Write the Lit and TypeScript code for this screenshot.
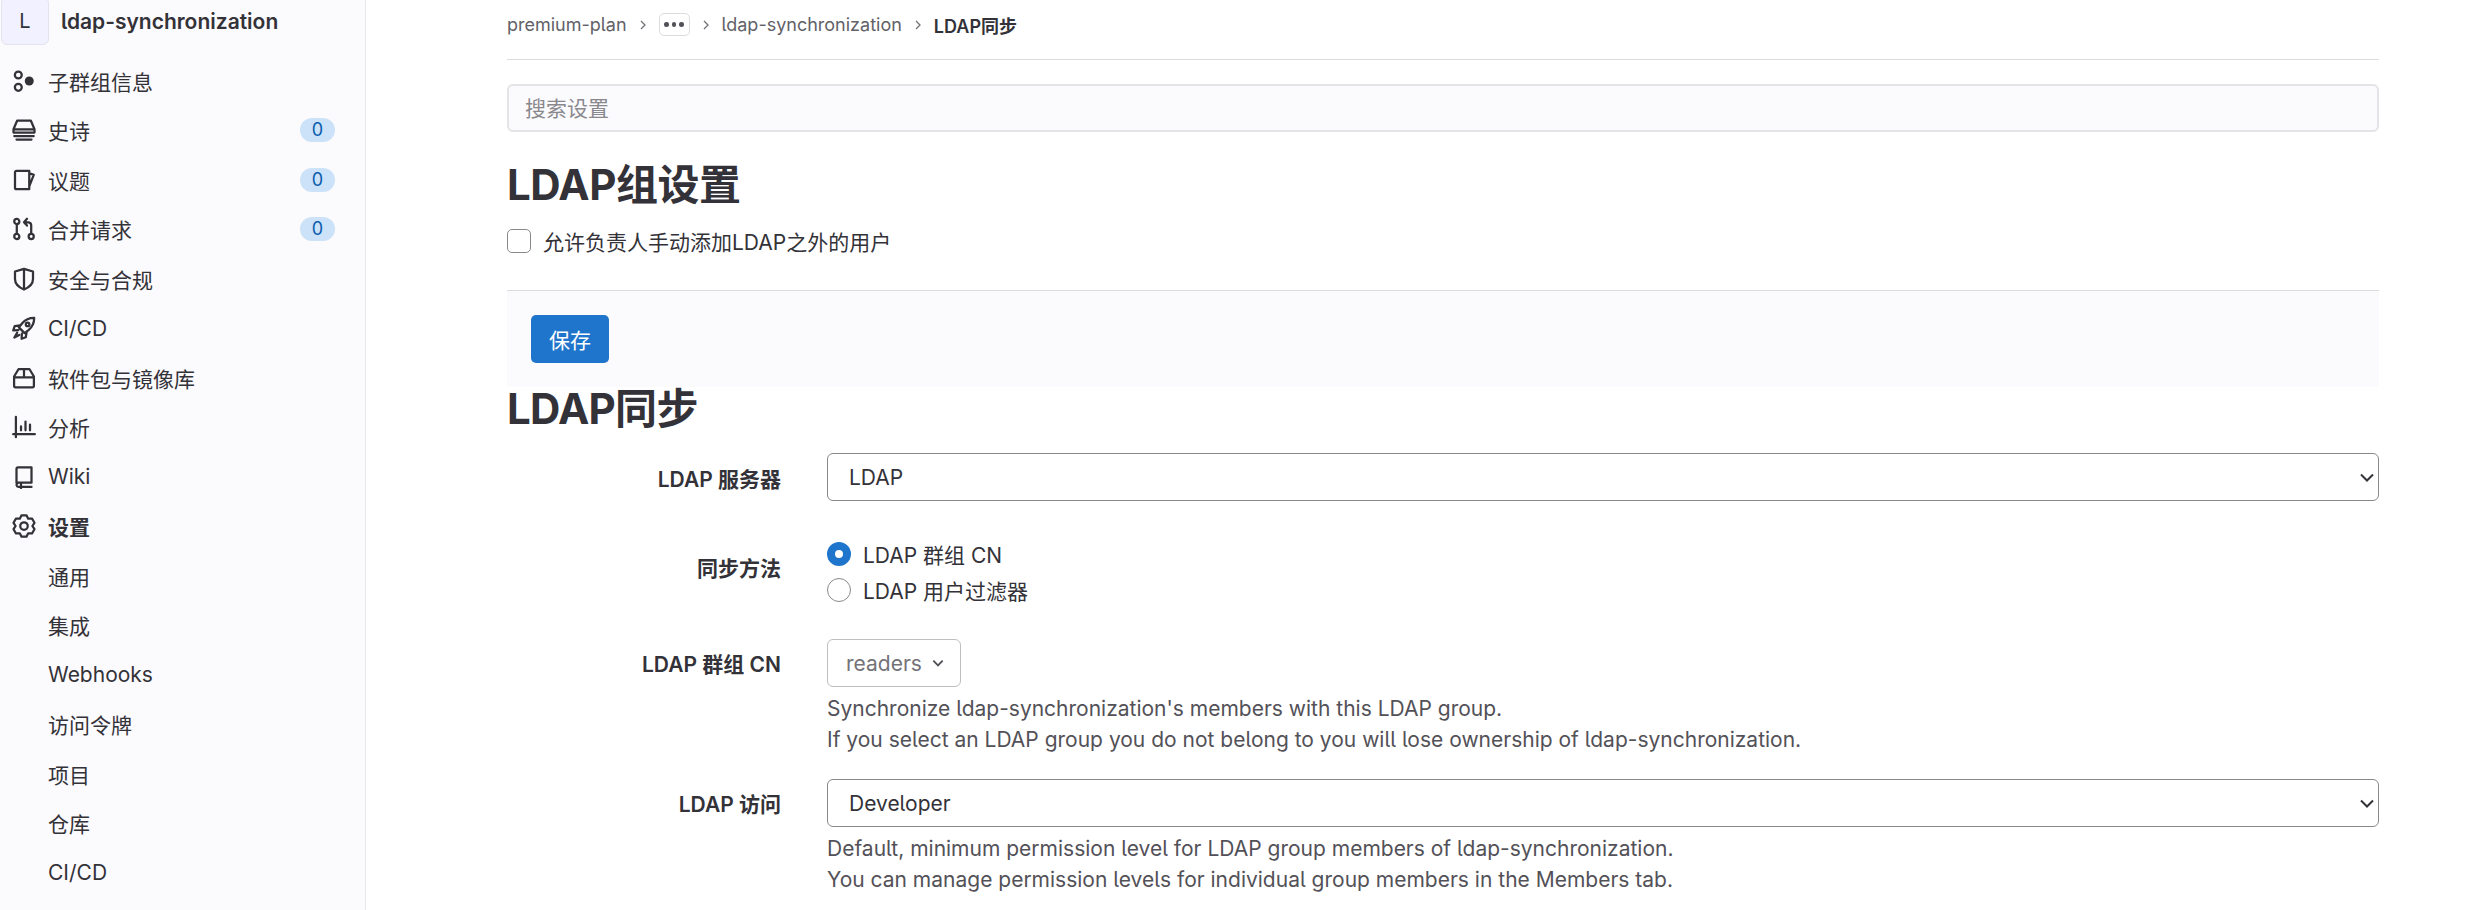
import { LitElement, html, css, svg } from 'lit';
import { customElement, state } from 'lit/decorators.js';

// Gear outline for the settings icon, six teeth round the middle of a 16 box.
const gearPath = (() => {
  const pts: string[] = [];
  for (let i = 0; i < 6; i++) {
    const a = (i * 60 - 90) * (Math.PI / 180);
    for (const [r, d] of [[5.6, -30], [7.3, -13], [7.3, 13], [5.6, 30]]) {
      const t = a + (d * Math.PI) / 180;
      pts.push(`${(8 + r * Math.cos(t)).toFixed(2)} ${(8 + r * Math.sin(t)).toFixed(2)}`);
    }
  }
  return `M${pts.join('L')}Z`;
})();

const icons: Record<string, unknown> = {
  subgroup: svg`<circle cx="4.2" cy="4" r="2.3"/><circle cx="4.2" cy="12.2" r="2.3"/><circle cx="11.5" cy="8" r="3" fill="currentColor" stroke="none"/>`,
  epic: svg`<path d="M1 7.5 3.4 1.8h9.2L15 7.5v2.2H1zM1 7.5h14M1.5 12h13M3 14.4h10"/>`,
  issue: svg`<path d="M3 1.9h8.5v12.2H3a1 1 0 0 1-1-1V2.9a1 1 0 0 1 1-1zM11.5 3.4l3 1.2-3 7.6"/>`,
  merge: svg`<circle cx="3.2" cy="3" r="1.7"/><circle cx="3.2" cy="13" r="1.7"/><circle cx="12.8" cy="13" r="1.7"/><path d="M3.2 4.7v6.6M12.8 11.3V5.5a2 2 0 0 0-2-2H8.5M10 1.2 8 3.5l2 2.2"/>`,
  shield: svg`<path d="M8 1.2 14 3v5c0 3.4-2.6 5.6-6 7-3.4-1.4-6-3.6-6-7V3zM8 1.2V15"/>`,
  rocket: svg`<path d="M14.8 1.2c-3.6 0-6 1.2-8 3.6L4.6 7.6l3.8 3.8 2.8-2.2c2.4-2 3.6-4.4 3.6-8zM5.4 6.2 1.8 6.8.8 9.6l3.4-.2M9.8 10.6l-.6 3.6-2.8 1 .2-3.4M3.4 11.2 1.6 14.4l3.2-1.8"/><circle cx="10.4" cy="5.6" r="1.2"/>`,
  package: svg`<path d="M4.4 2h7.2l3 5v6.2a1 1 0 0 1-1 1H2.4a1 1 0 0 1-1-1V7zM1.4 7.6h13.2M8 2v5.6"/>`,
  chart: svg`<path d="M2.6 1.2v13.6M.8 12.8h14.4M6 10.2V7.6M9 10.2V4.4M12 10.2V6.4"/>`,
  book: svg`<path d="M3 12V2.6a1 1 0 0 1 1-1h9v10.2H4.2A1.7 1.7 0 0 0 3 13.4a1.5 1.5 0 0 0 1.4 1.2H13M6 12v3.4"/>`,
  gear: svg`<path d=${gearPath}/><circle cx="8" cy="8" r="2.5"/>`,
};

const navItems = [
  { icon: 'subgroup', label: '子群组信息' },
  { icon: 'epic', label: '史诗', count: 0 },
  { icon: 'issue', label: '议题', count: 0 },
  { icon: 'merge', label: '合并请求', count: 0 },
  { icon: 'shield', label: '安全与合规' },
  { icon: 'rocket', label: 'CI/CD' },
  { icon: 'package', label: '软件包与镜像库' },
  { icon: 'chart', label: '分析' },
  { icon: 'book', label: 'Wiki' },
  { icon: 'gear', label: '设置', active: true },
];

const subItems = ['通用', '集成', 'Webhooks', '访问令牌', '项目', '仓库', 'CI/CD'];

@customElement('app-root')
class AppRoot extends LitElement {
  static styles = css`
    :host {
      display: flex;
      height: 910px;
      overflow: hidden;
      background: #fff;
      color: #333238;
      font-family: Inter, "Noto Sans CJK SC", sans-serif;
      font-feature-settings: "cv05" 1;
    }
    .sidebar {
      flex: none;
      width: 365px;
      height: 910px;
      background: #fbfafd;
      border-right: 1px solid #e9e9eb;
    }
    .context {
      display: flex;
      align-items: center;
      gap: 12px;
      margin: -3px 0 11px 1px;
    }
    .avatar {
      display: flex;
      align-items: center;
      justify-content: center;
      width: 46px;
      height: 46px;
      border: 1px solid #e4e3ef;
      border-radius: 6px;
      background: #f1f1ff;
      font-size: 20px;
    }
    .context-name {
      font-size: 21px;
      font-weight: 600;
    }
    .nav-row {
      display: flex;
      align-items: center;
      height: 49.5px;
      padding-left: 12px;
      font-size: 21px;
    }
    .nav-row.sub {
      padding-left: 48px;
    }
    .nav-row.active {
      font-weight: 700;
    }
    .nav-icon {
      flex: none;
      width: 24px;
      height: 24px;
      margin-right: 12px;
      fill: none;
      stroke: currentColor;
      stroke-width: 1.5;
      stroke-linejoin: round;
      stroke-linecap: round;
    }
    .badge {
      margin-left: auto;
      margin-right: 30px;
      width: 35px;
      height: 24px;
      line-height: 24px;
      border-radius: 12px;
      background: #cbe2f9;
      color: #0b5cad;
      font-size: 18px;
      text-align: center;
    }
    .main {
      flex: none;
      width: 1872px;
      margin-left: 141px;
      font-size: 21px;
    }
    .crumbs {
      display: flex;
      align-items: center;
      height: 60px;
      padding-bottom: 10px;
      box-sizing: border-box;
      border-bottom: 1px solid #dcdcde;
      color: #626168;
      font-size: 18px;
    }
    .crumbs b {
      color: #333238;
      font-weight: 600;
    }
    .sep {
      width: 32px;
      height: 14px;
      flex: none;
      fill: none;
      stroke: #737278;
      stroke-width: 1.3;
    }
    .more {
      display: flex;
      align-items: center;
      justify-content: center;
      gap: 3px;
      width: 29px;
      height: 21px;
      border: 1px solid #dcdcde;
      border-radius: 5px;
    }
    .more i {
      width: 4.5px;
      height: 4.5px;
      border-radius: 50%;
      background: #535158;
    }
    .search {
      display: block;
      width: 100%;
      height: 48px;
      margin-top: 24px;
      padding: 0 16px;
      box-sizing: border-box;
      border: 2px solid #e4e4e6;
      border-radius: 6px;
      background: #fbfafd;
      font: inherit;
    }
    .search::placeholder {
      color: #89888d;
    }
    h1 {
      margin: 28px 0 0;
      font-size: 42px;
      line-height: 50px;
      font-weight: 700;
      letter-spacing: -0.5px;
    }
    .check-row {
      display: flex;
      align-items: center;
      gap: 12px;
      height: 24px;
      margin-top: 19px;
    }
    .check {
      appearance: none;
      flex: none;
      width: 24px;
      height: 24px;
      margin: 0;
      border: 1px solid #89888d;
      border-radius: 5px;
      background: #fff;
    }
    .footer {
      height: 97px;
      margin-top: 37px;
      padding: 24px;
      box-sizing: border-box;
      border-top: 1px solid #dcdcde;
      background: #fbfafd;
    }
    .save {
      display: block;
      width: 78px;
      height: 48px;
      padding: 0;
      border: 0;
      border-radius: 5px;
      background: #1f75cb;
      color: #fff;
      font: inherit;
    }
    h2 {
      margin: 0;
      font-size: 42px;
      line-height: 44px;
      font-weight: 700;
      letter-spacing: -0.7px;
    }
    .field {
      display: grid;
      grid-template-columns: 274px 1fr;
      column-gap: 46px;
    }
    .field > label {
      height: 48px;
      box-sizing: border-box;
      font-weight: 600;
      text-align: right;
      line-height: 48px;
    }
    .f-server {
      margin-top: 22px;
    }
    .f-server > label {
      padding-top: 3px;
    }
    .f-method {
      margin-top: 35px;
    }
    .f-method > label {
      padding-top: 9px;
    }
    .f-group {
      margin-top: 31px;
    }
    .f-group > label {
      padding-top: 2px;
    }
    .f-access {
      margin-top: 24px;
    }
    .f-access > label {
      padding-top: 2px;
    }
    select {
      appearance: none;
      display: block;
      width: 100%;
      height: 48px;
      padding: 0 18px 0 21px;
      border: 1px solid #89888d;
      border-radius: 6px;
      background: #fff url("data:image/svg+xml,%3Csvg xmlns='http://www.w3.org/2000/svg' width='16' height='16' viewBox='0 0 16 16'%3E%3Cpath d='M2 5.5l6 6 6-6' fill='none' stroke='%23333238' stroke-width='2'/%3E%3C/svg%3E") no-repeat right 3px center;
      color: #333238;
      font: inherit;
    }
    .radio-row {
      display: flex;
      align-items: center;
      gap: 12px;
      height: 36px;
    }
    .radio {
      appearance: none;
      flex: none;
      width: 24px;
      height: 24px;
      margin: 0;
      border: 1px solid #89888d;
      border-radius: 50%;
      background: #fff;
    }
    .radio:checked {
      border: 8px solid #1f75cb;
    }
    .dropdown {
      display: flex;
      align-items: center;
      justify-content: space-between;
      width: 134px;
      height: 48px;
      padding: 0 15px 0 18px;
      box-sizing: border-box;
      border: 1px solid #bfbfc3;
      border-radius: 6px;
      background: #fff;
      color: #737278;
      font: inherit;
    }
    .dropdown svg {
      width: 14px;
      height: 14px;
      fill: none;
      stroke: #535158;
      stroke-width: 1.6;
    }
    .help {
      margin-top: 7px;
      color: #535158;
      font-size: 21px;
      line-height: 30.5px;
    }
  `;

  @state() search = '';

  renderIcon(name: string) {
    return html`<svg class="nav-icon" viewBox="0 0 16 16">${icons[name]}</svg>`;
  }

  renderSep() {
    return html`<svg class="sep" viewBox="0 0 32 14"><path d="M14 3l4 4-4 4"/></svg>`;
  }

  render() {
    return html`
      <aside class="sidebar">
        <div class="context">
          <div class="avatar">L</div>
          <span class="context-name">ldap-synchronization</span>
        </div>
        ${navItems.map(
          (item) => html`
            <div class="nav-row ${item.active ? 'active' : ''}">
              ${this.renderIcon(item.icon)}
              <span>${item.label}</span>
              ${item.count !== undefined ? html`<span class="badge">${item.count}</span>` : ''}
            </div>
          `
        )}
        ${subItems.map((label) => html`<div class="nav-row sub">${label}</div>`)}
      </aside>

      <main class="main">
        <nav class="crumbs">
          <span>premium-plan</span>
          ${this.renderSep()}
          <span class="more"><i></i><i></i><i></i></span>
          ${this.renderSep()}
          <span>ldap-synchronization</span>
          ${this.renderSep()}
          <b>LDAP同步</b>
        </nav>

        <input class="search" type="text" placeholder="搜索设置" .value=${this.search} />

        <h1>LDAP组设置</h1>
        <label class="check-row">
          <input class="check" type="checkbox" />
          <span>允许负责人手动添加LDAP之外的用户</span>
        </label>
        <div class="footer"><button class="save">保存</button></div>

        <h2>LDAP同步</h2>
        <div class="field f-server">
          <label>LDAP 服务器</label>
          <select><option>LDAP</option></select>
        </div>
        <div class="field f-method">
          <label>同步方法</label>
          <div>
            <label class="radio-row">
              <input class="radio" type="radio" name="method" checked />
              <span>LDAP 群组 CN</span>
            </label>
            <label class="radio-row">
              <input class="radio" type="radio" name="method" />
              <span>LDAP 用户过滤器</span>
            </label>
          </div>
        </div>
        <div class="field f-group">
          <label>LDAP 群组 CN</label>
          <div>
            <button class="dropdown">
              <span>readers</span>
              <svg viewBox="0 0 12 12"><path d="M2 4l4 4 4-4"/></svg>
            </button>
            <div class="help">
              Synchronize ldap-synchronization's members with this LDAP group.<br />
              If you select an LDAP group you do not belong to you will lose ownership of ldap-synchronization.
            </div>
          </div>
        </div>
        <div class="field f-access">
          <label>LDAP 访问</label>
          <div>
            <select><option>Developer</option></select>
            <div class="help">
              Default, minimum permission level for LDAP group members of ldap-synchronization.<br />
              You can manage permission levels for individual group members in the Members tab.
            </div>
          </div>
        </div>
      </main>
    `;
  }
}
